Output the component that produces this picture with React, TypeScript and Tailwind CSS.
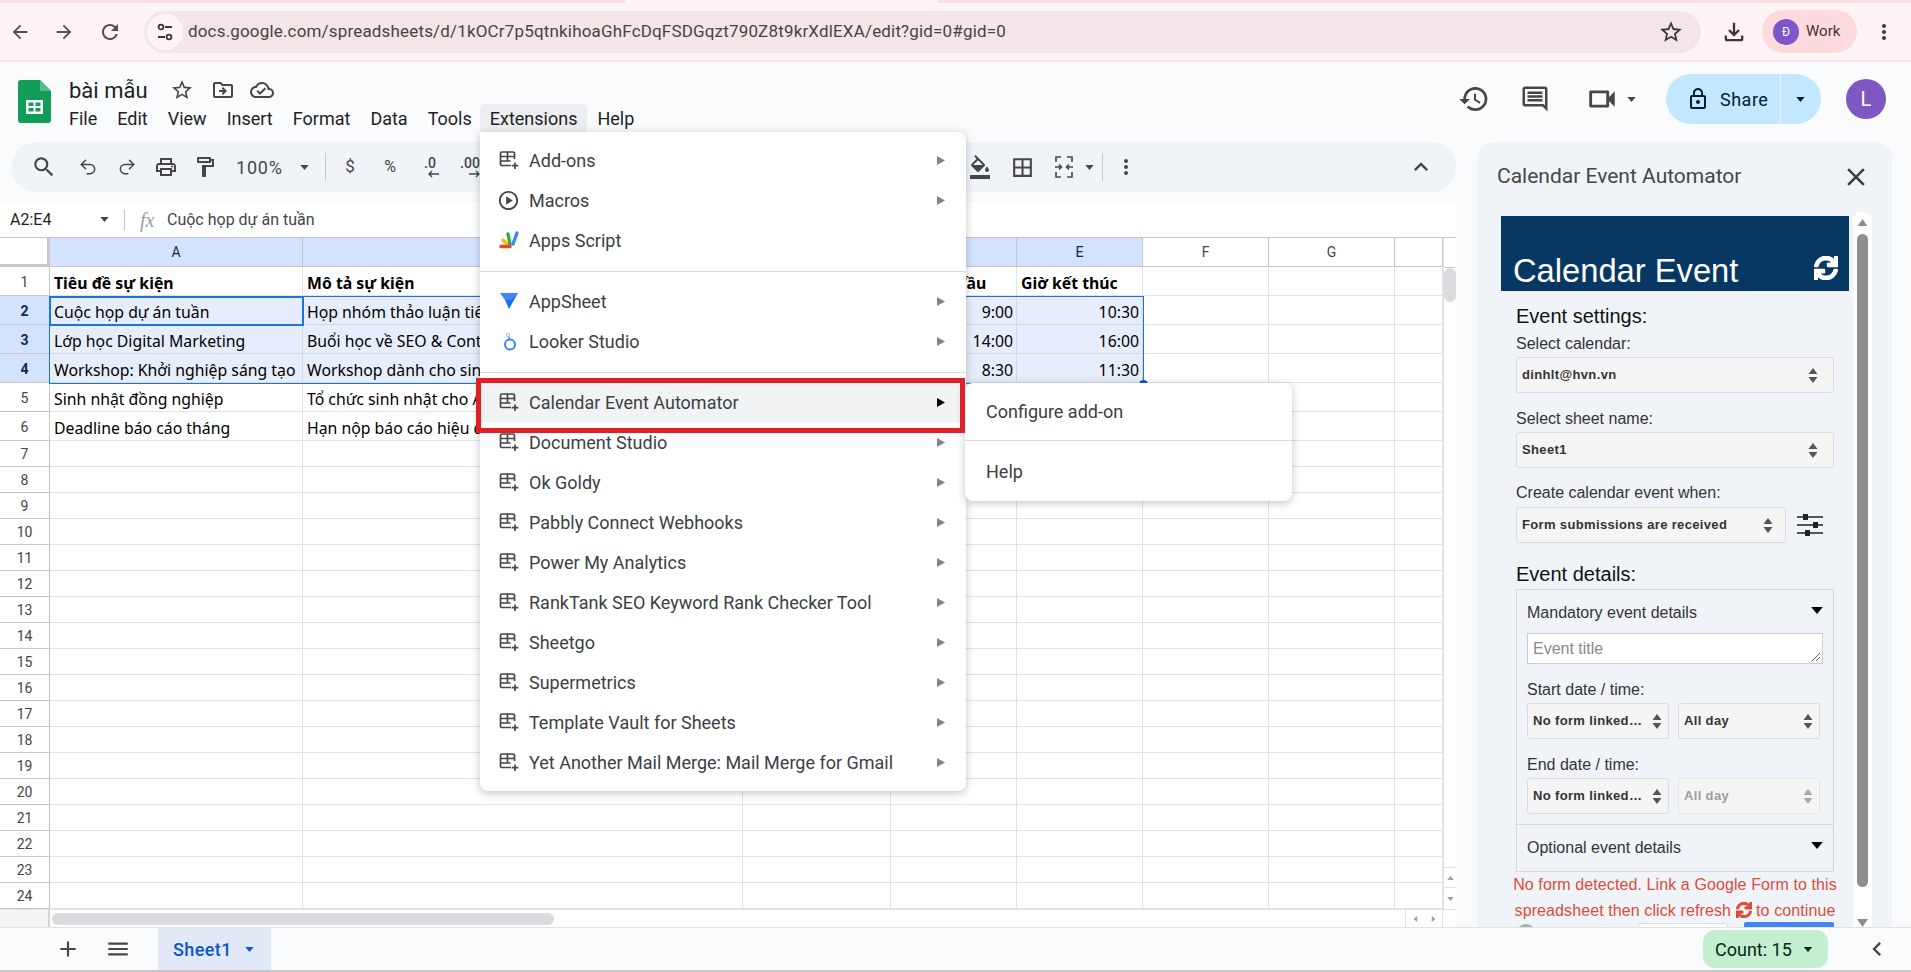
import React from 'react';
import { FaSync } from 'react-icons/fa';
import { Redo2, Undo2 } from 'lucide-react';
import {
  MdAdd, MdArrowBack, MdArrowForward, MdBorderAll, MdChevronLeft, MdClose, MdFormatColorFill,
  MdHistory, MdKeyboardArrowUp, MdLockOutline, MdMenu, MdMoreVert, MdOutlineCloudDone, MdOutlineComment,
  MdOutlineDriveFileMove, MdOutlineFileDownload, MdOutlineFormatPaint, MdOutlinePlayCircle, MdOutlinePrint,
  MdOutlineVideocam, MdRefresh, MdSearch, MdStarBorder,
} from 'react-icons/md';

const Caret = ({ className = '' }: { className?: string }) => (
  <svg width="10" height="6" viewBox="0 0 10 6" className={className}>
    <path d="M0 0h10L5 6z" fill="currentColor" />
  </svg>
);

const SideArrow = ({ active = false }: { active?: boolean }) => (
  <svg width="8" height="9" viewBox="0 0 8 9" className={active ? 'text-black' : 'text-[#80868b]'}>
    <path d="M0 0l8 4.5L0 9z" fill="currentColor" />
  </svg>
);

const AddonIcon = () => (
  <svg width="20" height="20" viewBox="0 0 20 20" fill="none" stroke="#444746" strokeWidth="1.7">
    <path d="M15.5 9V3.5A1.5 1.5 0 0014 2H3a1.5 1.5 0 00-1.5 1.5V14A1.5 1.5 0 003 15.5h9" />
    <path d="M1.5 6.5h14M1.5 11h10M8.5 2v9" />
    <path d="M16 12.5v6.5M12.8 15.7h6.5" />
  </svg>
);

const AppsScriptIcon = () => (
  <svg width="22" height="20" viewBox="0 0 22 20" fill="none" strokeWidth="3.4" strokeLinecap="round">
    <path d="M5 10l5 5" stroke="#fbbc04" />
    <path d="M10 4l2 10" stroke="#34a853" />
    <path d="M19 3l-4 11" stroke="#4285f4" />
    <path d="M3 16.5h9" stroke="#ea4335" />
  </svg>
);

const AppSheetIcon = () => (
  <svg width="20" height="18" viewBox="0 0 20 18">
    <path d="M1 1h18l-5 7H6z" fill="#4285f4" />
    <path d="M19 1l-9 16-4-9h6z" fill="#1a73e8" />
  </svg>
);

const LookerIcon = () => (
  <svg width="20" height="22" viewBox="0 0 20 22" fill="none">
    <circle cx="11" cy="14.5" r="5" stroke="#4285f4" strokeWidth="2" />
    <circle cx="9" cy="5" r="1.6" stroke="#a8c7fa" strokeWidth="1.2" />
    <path d="M9.6 7l1 2.4" stroke="#4285f4" strokeWidth="1.4" />
  </svg>
);

const SelectArrows = ({ muted = false }: { muted?: boolean }) => (
  <svg width="10" height="15" viewBox="0 0 10 15" className={muted ? 'text-[#a9a9a9]' : 'text-[#555555]'}>
    <path d="M5 0l4.5 6h-9zM5 15L.5 9h9z" fill="currentColor" />
  </svg>
);

const SlidersIcon = () => (
  <svg width="26" height="24" viewBox="0 0 26 24" className="text-[#222222]">
    <path d="M0 4h26M0 12h26M0 20h26" stroke="currentColor" strokeWidth="1.6" />
    <path d="M6 1h5v6H6zM16 9h5v6h-5zM8 17h5v6H8z" fill="currentColor" />
  </svg>
);

const SiteInfoIcon = () => (
  <svg width="16" height="20" viewBox="0 0 16 20" fill="none" stroke="#3f3437" strokeWidth="1.8">
    <circle cx="4" cy="5" r="2.4" />
    <path d="M8 5h7M1 15h7" />
    <circle cx="12" cy="15" r="2.4" />
  </svg>
);

const SheetsLogo = () => (
  <svg width="33" height="43" viewBox="0 0 33 43">
    <path d="M3 0h19l11 11v29a3 3 0 01-3 3H3a3 3 0 01-3-3V3a3 3 0 013-3z" fill="#0f9d58" />
    <path d="M22 0l11 11H22z" fill="#57bb8a" />
    <path d="M8 20h17v14H8zM10.5 22.5v3.5h5v-3.5zm7 0v3.5h5v-3.5zm-7 5.5v3.5h5V28zm7 0v3.5h5V28z" fill="#ffffff" fillRule="evenodd" />
  </svg>
);

const MergeIcon = () => (
  <svg width="20" height="22" viewBox="0 0 20 22" fill="none" stroke="#444746" strokeWidth="1.6">
    <path d="M7 1H2v5M13 1h5v5M7 21H2v-5M13 21h5v-5M1 11h6M5 8.5L7.5 11 5 13.5M19 11h-6M15 8.5L12.5 11l2.5 2.5" />
  </svg>
);

const DecimalIcon = ({ text, dir }: { text: string; dir: 'left' | 'right' }) => (
  <div className="flex flex-col items-center leading-none">
    <span className="text-[14px] font-medium leading-[14px]">{text}</span>
    <svg width="12" height="8" viewBox="0 0 12 8" fill="none" stroke="currentColor" strokeWidth="1.4" className={dir === 'left' ? 'ml-[6px]' : 'ml-[10px]'}>
      {dir === 'left' ? <path d="M12 4H2M5 1L2 4l3 3" /> : <path d="M0 4h10M7 1l3 3-3 3" />}
    </svg>
  </div>
);

const menuTop = [
  { label: 'Add-ons', icon: <AddonIcon />, arrow: true },
  { label: 'Macros', icon: <MdOutlinePlayCircle size={23} className="text-[#444746]" />, arrow: true },
  { label: 'Apps Script', icon: <AppsScriptIcon />, arrow: false },
];
const menuMid = [
  { label: 'AppSheet', icon: <AppSheetIcon />, arrow: true },
  { label: 'Looker Studio', icon: <LookerIcon />, arrow: true },
];
const menuAddons = [
  'Document Studio', 'Ok Goldy', 'Pabbly Connect Webhooks', 'Power My Analytics',
  'RankTank SEO Keyword Rank Checker Tool', 'Sheetgo', 'Supermetrics', 'Template Vault for Sheets',
  'Yet Another Mail Merge: Mail Merge for Gmail',
];

const MenuRow = ({ label, icon, arrow, active = false }: { label: string; icon: React.ReactNode; arrow: boolean; active?: boolean }) => (
  <div className={`flex h-10 items-center text-[18px] text-[#3c4043] ${active ? 'bg-[#f1f3f4]' : ''}`}>
    <div className="flex w-[49px] justify-center pl-[8px]">{icon}</div>
    <span className="flex-1 whitespace-nowrap">{label}</span>
    {arrow && <div className="mr-[21px]"><SideArrow active={active} /></div>}
  </div>
);

const menus = ['File', 'Edit', 'View', 'Insert', 'Format', 'Data', 'Tools'];

const columns = ['A', '', '', '', 'E', 'F', 'G', ''];
const tableRows: Record<number, string[]> = {
  1: ['Tiêu đề sự kiện', 'Mô tả sự kiện', 'Ngày', 'Giờ bắt đầu', 'Giờ kết thúc'],
  2: ['Cuộc họp dự án tuần', 'Họp nhóm thảo luận tiến độ', '', '9:00', '10:30'],
  3: ['Lớp học Digital Marketing', 'Buổi học về SEO & Content', '', '14:00', '16:00'],
  4: ['Workshop: Khởi nghiệp sáng tạo', 'Workshop dành cho sinh viên', '', '8:30', '11:30'],
  5: ['Sinh nhật đồng nghiệp', 'Tổ chức sinh nhật cho Anh', '', '', ''],
  6: ['Deadline báo cáo tháng', 'Hạn nộp báo cáo hiệu quả', '', '', ''],
};

const Grid = () => {
  const rowNumbers = Array.from({ length: 24 }, (_, i) => i + 1);
  return (
    <div className="relative flex min-h-0 flex-1 overflow-hidden bg-white">
      <div className="relative grid w-[1443px] grid-cols-[50px_253px_440px_148px_126px_126px_126px_126px_48px] grid-rows-[29px_29px_29px_29px_29px_29px_29px] auto-rows-[26px] font-['Noto_Sans',sans-serif] text-[15.8px] text-black">
        <div className="border-r-[3px] border-b-[3px] border-[#c7c7c7] bg-white" />
        {columns.map((col, i) => (
          <div
            key={i}
            className={`flex items-center justify-center border-r border-b border-[#c4c7c5] font-['Roboto',sans-serif] text-[14px] ${i < 5 ? 'bg-[#d3e3fd] text-[#0b2a5c]' : 'bg-white text-[#444746]'}`}
          >
            {col}
          </div>
        ))}
        {rowNumbers.map((r) => {
          const selected = r >= 2 && r <= 4;
          const data = tableRows[r] || [];
          return (
            <React.Fragment key={r}>
              <div className={`flex items-center justify-center border-r border-b border-[#c4c7c5] pt-[2px] font-['Roboto',sans-serif] text-[14px] ${selected ? 'bg-[#d3e3fd] font-bold text-[#0b2a5c]' : 'bg-white text-[#444746]'}`}>
                {r}
              </div>
              {[0, 1, 2, 3, 4, 5, 6, 7].map((c) => {
                const right = c === 3 || c === 4;
                const body = r > 1 && right;
                return (
                  <div
                    key={c}
                    className={`flex items-center overflow-hidden whitespace-nowrap border-r border-b pl-[4px] pr-[3px] pt-[6px] ${selected && c < 5 ? 'border-[#cfd9ea] bg-[#e6edfb]' : 'border-[#e1e3e1]'} ${body ? 'justify-end' : ''} ${r === 1 ? 'font-bold' : ''}`}
                  >
                    {data[c] || ''}
                  </div>
                );
              })}
            </React.Fragment>
          );
        })}
        {/* selection outline */}
        <div className="pointer-events-none absolute left-[49px] top-[58px] h-[88px] w-[1095px] border border-[#1a73e8]" />
        <div className="pointer-events-none absolute left-[49px] top-[58px] h-[30px] w-[255px] border-2 border-[#1a73e8]" />
        <div className="absolute left-[1139px] top-[142px] h-[9px] w-[9px] rounded-full bg-[#0b57d0]" />
      </div>
      <div className="flex w-[13px] flex-col border-l border-[#e1e3e1] bg-white">
        <div className="h-[30px] border-b border-[#c4c7c5]" />
        <div className="h-[34px] rounded-full bg-[#dadce0]" />
        <div className="flex-1" />
        <div className="flex h-[21px] items-center justify-center border-y border-[#e1e3e1]">
          <Caret className="h-[4px] w-[7px] rotate-180 text-[#9aa0a6]" />
        </div>
        <div className="flex h-[21px] items-center justify-center">
          <Caret className="h-[4px] w-[7px] text-[#9aa0a6]" />
        </div>
      </div>
    </div>
  );
};

const SelectBox = ({ value, className, muted = false }: { value: string; className: string; muted?: boolean }) => (
  <div className={`flex items-center justify-between rounded-[3px] border border-[#dcdcdc] bg-[#f5f5f5] pl-[5px] text-[13px] font-bold ${muted ? 'text-[#9c9c9c]' : 'text-[#333333]'} ${className}`}>
    <span className="truncate tracking-[0.35px]">{value}</span>
    <SelectArrows muted={muted} />
  </div>
);

const Label = ({ text, className }: { text: string; className: string }) => (
  <div className={`flex h-5 items-center whitespace-nowrap text-[16px] text-[#333333] ${className}`}>{text}</div>
);

const AddonPanel = () => (
  <aside className="flex w-[415px] flex-col overflow-hidden rounded-t-[16px] bg-[#f0f4f9]">
    <div className="flex h-[70px] shrink-0 items-center justify-between pl-[20px] pr-[21px]">
      <span className="text-[21px] text-[#444746]">Calendar Event Automator</span>
      <MdClose size={30} className="text-[#3c4043]" />
    </div>
    <div className="flex min-h-0 flex-1 pl-[24px] font-['Liberation_Sans',Arial,sans-serif]">
      <div className="w-[348px] overflow-hidden pt-[4px]">
        <div className="flex h-[75px] items-end justify-between bg-[#073763] pb-[1px] pl-[12px] pr-[11px] text-white">
          <span className="text-[32.7px] leading-[38px]">Calendar Event</span>
          <FaSync size={24} stroke="currentColor" strokeWidth={30} className="mb-[10px]" />
        </div>
        <div className="px-[15px]">
          <div className="mt-[13px] flex h-6 items-center text-[20px] text-[#111111]">Event settings:</div>
          <Label text="Select calendar:" className="mt-[6px]" />
          <SelectBox value="dinhlt@hvn.vn" className="mt-[3px] h-9 pr-[15px]" />
          <Label text="Select sheet name:" className="mt-4" />
          <SelectBox value="Sheet1" className="mt-[3px] h-9 pr-[15px]" />
          <Label text="Create calendar event when:" className="mt-[15px]" />
          <div className="mt-1 flex items-center justify-between pr-[11px]">
            <SelectBox value="Form submissions are received" className="h-[36px] w-[270px] pr-[12px]" />
            <SlidersIcon />
          </div>
          <div className="mt-[19px] flex h-6 items-center text-[20px] text-[#111111]">Event details:</div>
          <div className="mt-[3px] border border-[#d5d9df] pb-[13px]">
            <div className="px-[10px]">
              <div className="mt-[13px] flex h-5 items-center justify-between text-[16px] text-[#333333]">
                <span>Mandatory event details</span>
                <Caret className="mb-[6px] h-[7px] w-[12px] text-black" />
              </div>
              <div className="relative mt-[10px] flex h-[31px] w-[296px] items-center border border-[#cccccc] bg-white pl-[5px] text-[16px] text-[#8a8a8a]">
                Event title
                <svg width="10" height="10" viewBox="0 0 10 10" className="absolute bottom-[1px] right-[1px]" stroke="#555555" fill="none">
                  <path d="M1 9l8-8M5 9l4-4" />
                </svg>
              </div>
              <Label text="Start date / time:" className="mt-4" />
              <div className="mt-[3px] flex gap-[9px]">
                <SelectBox value="No form linked…" className="h-9 w-[142px] pr-[6px]" />
                <SelectBox value="All day" className="h-9 w-[142px] pr-[6px]" />
              </div>
              <Label text="End date / time:" className="mt-4" />
              <div className="mt-[3px] flex gap-[9px]">
                <SelectBox value="No form linked…" className="h-9 w-[142px] pr-[6px]" />
                <SelectBox value="All day" className="h-9 w-[142px] border-[#e6e6e6] pr-[6px]" muted />
              </div>
            </div>
            <div className="mt-[10px] border-t border-[#d5d9df] px-[10px]">
              <div className="mt-[13px] flex h-5 items-center justify-between text-[16px] text-[#333333]">
                <span>Optional event details</span>
                <Caret className="mb-[6px] h-[7px] w-[12px] text-black" />
              </div>
            </div>
          </div>
          <div className="-mx-[3px] whitespace-nowrap text-center text-[16px] leading-[26px] tracking-[0.1px] text-[#dd4b39]">
            <div>No form detected. Link a Google Form to this</div>
            <div>
              spreadsheet then click refresh <FaSync size={16} stroke="currentColor" strokeWidth={30} className="inline align-[-2px]" /> to continue
            </div>
          </div>
          <div className="flex items-start">
            <div className="h-5 w-5 rounded-full bg-[#a9a9a9]" />
            <div className="ml-[102px] mt-[-1px] h-9 w-[90px] rounded-[2px] border border-[#dcdcdc] bg-white" />
            <div className="ml-4 mt-[-2px] h-9 w-[90px] rounded-[2px] bg-[#4285f4]" />
          </div>
        </div>
      </div>
      <div className="ml-[4px] mt-0 flex w-[19px] flex-col items-center rounded-t-[8px] bg-white pt-[7px]">
        <svg width="11" height="8" viewBox="0 0 11 8" className="text-[#8e8e8e]"><path d="M5.5 0L11 8H0z" fill="currentColor" /></svg>
        <div className="mt-[8px] h-[653px] w-[11px] shrink-0 rounded-full bg-[#8e8e8e]" />
        <svg width="11" height="8" viewBox="0 0 11 8" className="mt-[32px] shrink-0 text-[#8e8e8e]"><path d="M0 0h11L5.5 8z" fill="currentColor" /></svg>
      </div>
    </div>
  </aside>
);

const TIcon = ({ children, w = 'w-[39px]' }: { children: React.ReactNode; w?: string }) => (
  <div className={`flex shrink-0 items-center justify-center text-[#444746] ${w}`}>{children}</div>
);

const App = () => (
  <div className="relative flex h-[972px] w-[1911px] flex-col overflow-hidden bg-[#f9fbfd] font-['Roboto',sans-serif]">
    {/* browser chrome */}
    <div className="h-[3px] bg-[#fde0e5]"><div className="ml-[625px] h-full w-[312px] bg-[#fef4f5]" /></div>
    <div className="flex h-[57px] items-center bg-[#fef4f5] text-[#5b4a4e]">
      <MdArrowBack size={22} className="ml-[9px]" />
      <MdArrowForward size={22} className="ml-[22px]" />
      <MdRefresh size={24} className="ml-[23px]" />
      <div className="ml-[22px] flex h-[42px] w-[1557px] items-center rounded-full bg-[#f3e6e9]">
        <div className="ml-[3px] flex h-9 w-9 items-center justify-center rounded-full bg-[#fef4f5]">
          <SiteInfoIcon />
        </div>
        <span className="ml-[5px] text-[17px] tracking-[0.17px] text-[#4f3f43]">docs.google.com/spreadsheets/d/1kOCr7p5qtnkihoaGhFcDqFSDGqzt790Z8t9krXdlEXA/edit?gid=0#gid=0</span>
        <MdStarBorder size={26} className="ml-auto mr-[17px] text-[#3f3437]" />
      </div>
      <MdOutlineFileDownload size={28} className="ml-[19px] text-[#4a3036]" />
      <div className="ml-[14px] flex h-[43px] w-[95px] items-center rounded-full bg-[#fddade]">
        <div className="ml-[11px] flex h-[26px] w-[26px] items-center justify-center rounded-full bg-[#7b57c7] text-[12px] text-white">Đ</div>
        <span className="ml-[7px] text-[15px] text-[#4a3036]">Work</span>
      </div>
      <MdMoreVert size={24} className="ml-[15px] text-[#4a3036]" />
    </div>
    <div className="h-[2px] bg-[#fde0e5]" />

    {/* sheets header */}
    <header className="flex h-[80px] shrink-0 items-start">
      <div className="ml-[18px] mt-[18px]"><SheetsLogo /></div>
      <div className="ml-[18px] mt-[14px]">
        <div className="flex h-7 items-center text-[#444746]">
          <span className="text-[22px] text-[#1f1f1f]">bài mẫu</span>
          <MdStarBorder size={24} className="ml-[22px]" />
          <MdOutlineDriveFileMove size={24} className="ml-[17px]" />
          <MdOutlineCloudDone size={24} className="ml-[15px]" />
        </div>
        <nav className="flex h-7 items-center gap-5 text-[18px] text-[#1f1f1f]">
          {menus.map((m) => <span key={m}>{m}</span>)}
          <span className="-ml-[12px] -mr-[10px] flex h-7 items-center rounded-t-[6px] bg-[#eceef1] px-[10px]">Extensions</span>
          <span>Help</span>
        </nav>
      </div>
      <div className="ml-auto flex h-[50px] translate-y-[12px] items-center text-[#444746]">
        <MdHistory size={32} />
        <MdOutlineComment size={30} className="ml-[30px]" />
        <MdOutlineVideocam size={34} className="ml-[35px]" />
        <Caret className="ml-[8px] h-[5px] w-[9px]" />
        <div className="ml-[30px] flex h-[50px] w-[155px] items-center rounded-full bg-[#c2e7ff] text-[#001d35]">
          <MdLockOutline size={24} className="ml-[20px]" />
          <span className="ml-[10px] text-[18px] tracking-[0.5px]">Share</span>
          <div className="ml-[12px] h-full w-px bg-[#eaf6ff]" />
          <Caret className="ml-[15px] h-[5px] w-[9px]" />
        </div>
        <div className="ml-[25px] mr-[25px] flex h-10 w-10 items-center justify-center rounded-full bg-[#7e57c2] text-[20px] text-white">L</div>
      </div>
    </header>

    <main className="flex min-h-0 flex-1">
      <div className="flex w-[1456px] flex-col">
        {/* toolbar */}
        <div className="ml-[12px] flex h-[50px] shrink-0 items-center rounded-[24px] bg-[#f0f4f9] text-[#444746]">
          <TIcon w="w-[56px] pl-[8px]"><MdSearch size={26} /></TIcon>
          <TIcon><Undo2 size={20} strokeWidth={1.8} /></TIcon>
          <TIcon><Redo2 size={20} strokeWidth={1.8} /></TIcon>
          <TIcon><MdOutlinePrint size={24} /></TIcon>
          <TIcon><MdOutlineFormatPaint size={24} /></TIcon>
          <span className="ml-[12px] w-[47px] text-[18px] tracking-[0.8px]">100%</span>
          <Caret className="ml-[17px] h-[5px] w-[9px]" />
          <div className="ml-[16px] h-7 w-px bg-[#c7c7c7]" />
          <div className="w-[4px] shrink-0" />
          <TIcon w="w-[40px]"><span className="text-[17px]">$</span></TIcon>
          <TIcon w="w-[40px]"><span className="text-[16px]">%</span></TIcon>
          <TIcon w="w-[40px]"><DecimalIcon text=".0" dir="left" /></TIcon>
          <TIcon w="w-[40px]"><DecimalIcon text=".00" dir="right" /></TIcon>
          <div className="w-[470px] shrink-0" />
          <TIcon w="w-[40px]"><MdFormatColorFill size={24} /></TIcon>
          <TIcon w="w-[44px]"><MdBorderAll size={25} /></TIcon>
          <TIcon w="w-[40px]"><MergeIcon /></TIcon>
          <Caret className="ml-[1px] h-[5px] w-[9px]" />
          <div className="ml-[8px] h-7 w-px bg-[#c7c7c7]" />
          <MdMoreVert size={24} className="ml-[11px]" />
          <MdKeyboardArrowUp size={28} className="ml-auto mr-[21px]" />
        </div>
        {/* formula bar */}
        <div className="mt-[10px] flex h-9 shrink-0 items-center border-b border-[#c7c7c7] bg-white">
          <span className="ml-[10px] w-[89px] text-[16px] text-[#1f1f1f]">A2:E4</span>
          <Caret className="ml-[1px] h-[5px] w-[9px] text-[#444746]" />
          <div className="ml-[15px] h-[22px] w-px bg-[#c7c7c7]" />
          <span className="ml-[15px] w-[25px] font-['Liberation_Serif',serif] text-[20px] italic text-[#9aa0a6]">fx</span>
          <span className="ml-[2px] text-[16px] text-[#444746]">Cuộc họp dự án tuần</span>
        </div>
        <Grid />
        {/* horizontal scrollbar */}
        <div className="flex h-[18px] shrink-0 items-center border-t border-[#e1e3e1] bg-white">
          <div className="h-full w-[50px] border-r-[2px] border-[#d5d5d5] bg-[#f4f5f6]" />
          <div className="ml-[2px] h-[12px] w-[502px] rounded-full bg-[#dadce0]" />
          <div className="ml-[851px] flex h-full w-[38px] items-center justify-around border-x border-[#e1e3e1] text-[#9aa0a6]">
            <Caret className="h-[4px] w-[7px] rotate-90" />
            <Caret className="h-[4px] w-[7px] -rotate-90" />
          </div>
        </div>
      </div>
      <div className="ml-[21px] flex min-h-0">
        <AddonPanel />
      </div>
    </main>

    {/* sheet tabs */}
    <footer className="flex h-[45px] shrink-0 items-center border-t border-[#e1e3e1] border-b-2 border-b-[#c7c7c7] text-[#444746]">
      <MdAdd size={26} className="ml-[55px]" />
      <MdMenu size={26} className="ml-[24px]" />
      <div className="ml-[27px] flex h-full w-[113px] items-center bg-[#e1e9f7] text-[#0b57d0]">
        <span className="ml-[15px] text-[18px] font-medium tracking-[0.4px]">Sheet1</span>
        <Caret className="ml-[13px] h-[5px] w-[9px]" />
      </div>
      <div className="ml-auto flex h-[38px] w-[125px] items-center rounded-[12px] bg-[#c4eed0] pl-[12px] text-[18px] text-[#072711]">
        Count: 15
        <Caret className="ml-[11px] h-[5px] w-[10px]" />
      </div>
      <MdChevronLeft size={28} className="ml-[35px] mr-[20px]" />
    </footer>

    {/* Extensions menu */}
    <div className="absolute left-[480px] top-[132px] z-10 h-[659px] w-[486px] rounded-b-[8px] rounded-tr-[8px] bg-white pt-[8px] shadow-[0_2px_8px_rgba(60,64,67,0.3)]">
      {menuTop.map((item) => <MenuRow key={item.label} {...item} />)}
      <div className="mb-[9px] mt-[11px] h-px bg-[#dadce0]" />
      {menuMid.map((item) => <MenuRow key={item.label} {...item} />)}
      <div className="mb-[9px] mt-[11px] h-px bg-[#dadce0]" />
      <MenuRow label="Calendar Event Automator" icon={<AddonIcon />} arrow active />
      {menuAddons.map((label) => <MenuRow key={label} label={label} icon={<AddonIcon />} arrow />)}
    </div>

    {/* Submenu */}
    <div className="absolute left-[965px] top-[383px] z-10 h-[118px] w-[327px] rounded-[8px] bg-white text-[18px] text-[#3c4043] shadow-[0_2px_8px_rgba(60,64,67,0.3)]">
      <div className="flex h-[57px] items-center pl-[21px]">Configure add-on</div>
      <div className="h-px bg-[#dadce0]" />
      <div className="flex h-[60px] items-center pl-[21px]">Help</div>
    </div>

    {/* red highlight */}
    <div className="pointer-events-none absolute left-[476px] top-[378px] z-20 h-[55px] w-[489px] border-[5px] border-[#e01f26]" />
  </div>
);

export default App;
